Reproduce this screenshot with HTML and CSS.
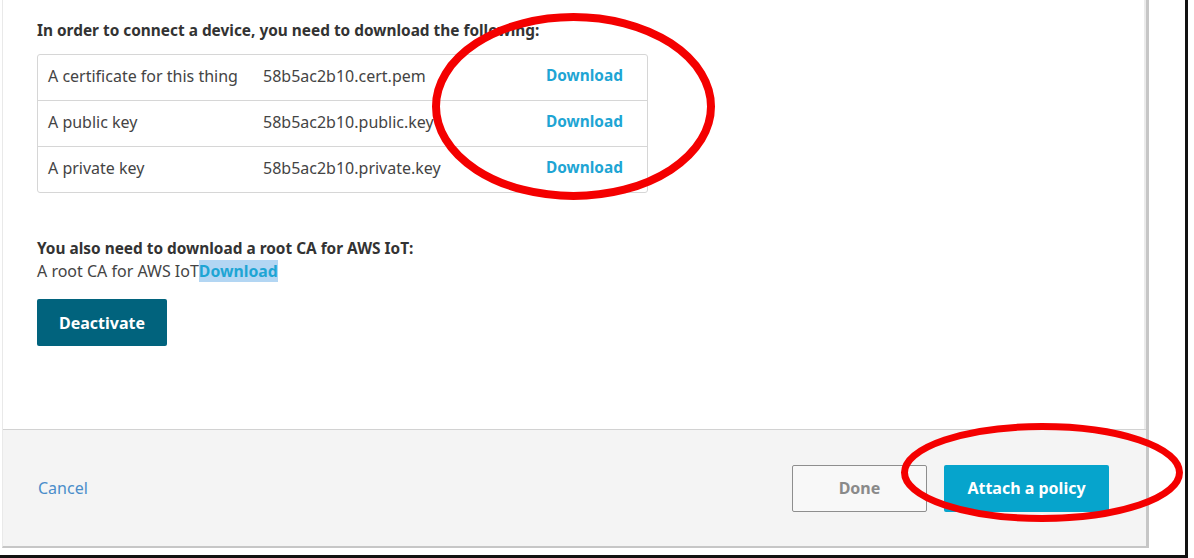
FILE: index.html
```html
<!DOCTYPE html>
<html lang="en">
<head>
<meta charset="utf-8">
<title>Certificate created</title>
<link rel="stylesheet" href="styles.css">
</head>
<body>
<div class="frame">
  <div class="panel">
    <div class="content">
      <p class="heading">In order to connect a device, you need to download the following:</p>
      <div class="files">
        <div class="row">
          <span class="label">A certificate for this thing</span>
          <span class="file">58b5ac2b10.cert.pem</span>
          <a class="dl" href="#">Download</a>
        </div>
        <div class="row">
          <span class="label">A public key</span>
          <span class="file">58b5ac2b10.public.key</span>
          <a class="dl" href="#">Download</a>
        </div>
        <div class="row">
          <span class="label">A private key</span>
          <span class="file">58b5ac2b10.private.key</span>
          <a class="dl" href="#">Download</a>
        </div>
      </div>
      <p class="heading heading-ca">You also need to download a root CA for AWS IoT:</p>
      <p class="ca-line">A root CA for AWS IoT<a class="dl dl-selected" href="#">Download</a></p>
      <button class="btn btn-deactivate" type="button">Deactivate</button>
    </div>
    <div class="footer">
      <a class="cancel" href="#">Cancel</a>
      <div class="actions">
        <button class="btn btn-done" type="button">Done</button>
        <button class="btn btn-primary" type="button">Attach a policy</button>
      </div>
    </div>
  </div>
  <svg class="annotations" width="1184" height="555" viewBox="0 0 1184 555" aria-hidden="true">
    <ellipse cx="573.5" cy="106.5" rx="137.5" ry="89.5" fill="none" stroke="#f40000" stroke-width="8"/>
    <ellipse cx="1042" cy="472.5" rx="137.5" ry="46" fill="none" stroke="#f40000" stroke-width="7"/>
  </svg>
</div>
</body>
</html>
```

FILE: styles.css
```css
* {
  box-sizing: border-box;
}

html,
body {
  margin: 0;
  background: #ffffff;
}

body {
  font-family: "Noto Sans", "Open Sans", sans-serif;
  font-size: 16px;
  color: #444444;
  overflow: hidden;
}

.frame {
  position: relative;
  width: 1188px;
  height: 558px;
  border-right: 3px solid #111111;
  border-bottom: 3px solid #111111;
  background: #ffffff;
}

.panel {
  display: flex;
  flex-direction: column;
  width: 1147px;
  height: 548px;
  margin-left: 2px;
  border-left: 1px solid #e9e9e9;
  border-right: 3px solid #c6c6c6;
  border-bottom: 2px solid #c6c6c6;
  box-shadow: inset -2px 0 0 #ebebeb;
}

.content {
  flex: 1;
  padding: 20px 34px 0;
}

.heading {
  margin: 0;
  font-size: 15.4px;
  line-height: 22px;
  font-weight: 700;
  color: #333333;
}

.files {
  width: 611px;
  margin-top: 12px;
  border: 1px solid #d6d6d6;
  border-radius: 3px;
}

.row {
  display: grid;
  grid-template-columns: 215px 283px auto;
  align-items: center;
  height: 46px;
  padding-left: 10px;
  padding-bottom: 3px;
  line-height: 22px;
}

.row + .row {
  border-top: 1px solid #d6d6d6;
}

.row:first-child {
  height: 45px;
}

.label,
.file {
  color: #444444;
}

.dl {
  font-size: 15.4px;
  font-weight: 700;
  color: #1ea5d4;
  text-decoration: none;
}

.heading-ca {
  margin-top: 45px;
}

.ca-line {
  margin: 0;
  line-height: 22px;
  color: #444444;
}

.dl-selected {
  font-size: 15.8px;
  background: #b3d6f3;
}

.btn {
  font-family: "Noto Sans", "Open Sans", sans-serif;
  font-size: 16px;
  font-weight: 700;
  border-radius: 2px;
  cursor: pointer;
}

.btn-deactivate {
  margin-top: 17px;
  width: 130px;
  height: 47px;
  border: none;
  background: #01637d;
  color: #ffffff;
}

.footer {
  display: flex;
  align-items: center;
  justify-content: space-between;
  height: 117px;
  padding: 0 37px 0 35px;
  border-top: 1px solid #d2d2d2;
  background: #f4f4f4;
}

.cancel {
  color: #4a8dca;
  text-decoration: none;
  font-size: 16px;
}

.actions {
  display: flex;
  gap: 17px;
  align-items: center;
}

.btn-done {
  width: 135px;
  height: 47px;
  border: 1px solid #8e8e8e;
  background: #f8f8f8;
  color: #8a8a8a;
}

.btn-primary {
  width: 165px;
  height: 47px;
  border: none;
  background: #06a4cc;
  color: #ffffff;
}

.annotations {
  position: absolute;
  top: 0;
  left: 0;
  pointer-events: none;
}
```
